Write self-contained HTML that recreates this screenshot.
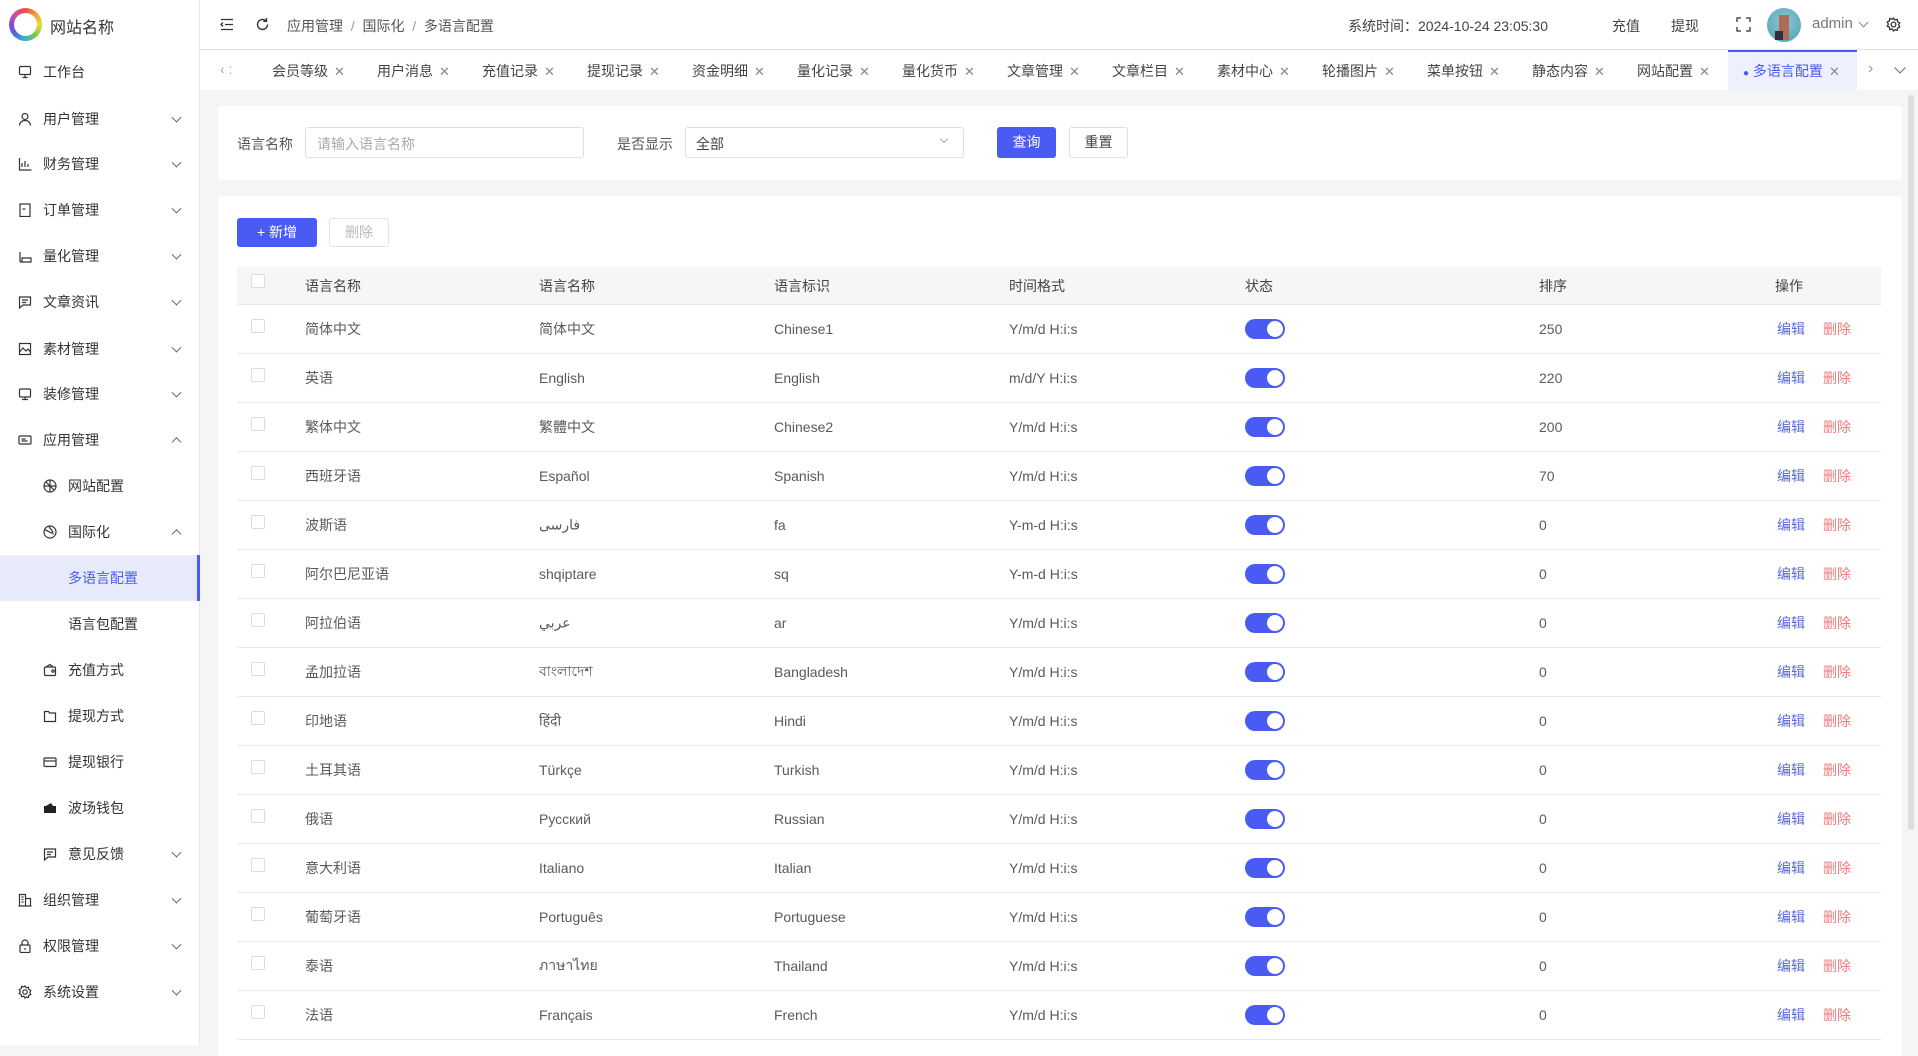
<!DOCTYPE html>
<html><head><meta charset="utf-8">
<style>
*{margin:0;padding:0;box-sizing:border-box}
body{width:1918px;height:1045px;overflow:hidden;background:#f5f5f5;font-family:"Liberation Sans","Noto Sans CJK SC",sans-serif;font-size:14px;color:#555;position:relative}
.a{position:absolute;white-space:nowrap}
#side{position:absolute;left:0;top:0;width:200px;height:1045px;background:#fff;border-right:1px solid #e8e8e8}
#head{position:absolute;left:200px;top:0;width:1718px;height:50px;background:#fff;border-bottom:1px solid #e4e4e4}
#tabs{position:absolute;left:200px;top:50px;width:1718px;height:40px;background:#fff}
.mi{position:absolute;left:0;width:200px;height:46px;font-size:14px;color:#333}
.mi .t{position:absolute;left:43px;top:50%;transform:translateY(-50%)}
.mi .ic{position:absolute;left:18px;top:50%;transform:translateY(-50%);width:14px;height:14px}
.mi.sub .t{left:68px}.mi.sub .ic{left:43px}
.mi .ch{position:absolute;left:173px;top:50%;width:7px;height:7px;border-right:1px solid #666;border-bottom:1px solid #666;transform:translateY(-70%) rotate(45deg)}
.mi .ch.up{transform:translateY(-20%) rotate(-135deg)}
.tab{position:absolute;top:51px;height:40px;line-height:40px;font-size:14px;color:#444}
.tab .x{color:#888;margin-left:6px;font-size:13px}
.card{position:absolute;background:#fff;border-radius:3px}
.row{position:absolute;left:237px;width:1644px;height:49px;border-bottom:1px solid #ebebeb;background:#fff;font-size:14px;color:#5a5a5a}
.row span{position:absolute;top:50%;transform:translateY(-50%);white-space:nowrap}
.cb{position:absolute;left:14px;top:50%;margin-top:-10px;width:14px;height:14px;border:1px solid #dcdcdc;border-radius:2px;background:#fff}
.sw{position:absolute;left:1008px;top:50%;margin-top:-10px;width:40px;height:20px;border-radius:10px;background:#4a5bf3}
.sw:after{content:"";position:absolute;right:2px;top:2px;width:16px;height:16px;border-radius:50%;background:#fff}
.ed{color:#5a6ad6}.de{color:#ef7b7b}
</style></head><body>

<div id="side">
  <div class="a" style="left:9px;top:8px;width:33px;height:33px;border-radius:50%;background:conic-gradient(#e84d4d,#f2a03c,#f4d53c,#7ac943,#3cb6c9,#4a6de0,#8a4ad6,#d64aa8,#e84d4d)"></div>
  <div class="a" style="left:14px;top:13px;width:23px;height:23px;border-radius:50%;background:#fff"></div>
  <div class="a" style="left:50px;top:14px;font-size:16px;color:#333">网站名称</div>

  <div class="mi" style="top:49px"><svg class="ic" viewBox="0 0 14 14" fill="none" stroke="#333" stroke-width="1.2"><rect x="1.5" y="1.5" width="11" height="8" rx="1"/><path d="M7 9.5v3M4.5 12.5h5"/></svg><span class="t">工作台</span></div>
  <div class="mi" style="top:96px"><svg class="ic" viewBox="0 0 14 14" fill="none" stroke="#333" stroke-width="1.2"><circle cx="7" cy="4.5" r="3"/><path d="M1.5 13.5c0-3 2.5-5 5.5-5s5.5 2 5.5 5"/></svg><span class="t">用户管理</span><i class="ch"></i></div>
  <div class="mi" style="top:141px"><svg class="ic" viewBox="0 0 14 14" fill="none" stroke="#333" stroke-width="1.2"><path d="M1.5 1v12h12M4 10V6M7 10V4M10 10V7"/></svg><span class="t">财务管理</span><i class="ch"></i></div>
  <div class="mi" style="top:187px"><svg class="ic" viewBox="0 0 14 14" fill="none" stroke="#333" stroke-width="1.2"><rect x="2" y="1" width="10" height="12.5"/><path d="M4.5 6h3"/></svg><span class="t">订单管理</span><i class="ch"></i></div>
  <div class="mi" style="top:233px"><svg class="ic" viewBox="0 0 14 14" fill="none" stroke="#333" stroke-width="1.2"><path d="M2 3v10M2 13h11V9H4v4"/></svg><span class="t">量化管理</span><i class="ch"></i></div>
  <div class="mi" style="top:279px"><svg class="ic" viewBox="0 0 14 14" fill="none" stroke="#333" stroke-width="1.2"><path d="M1.5 2h11v8H5l-3.5 3z"/><path d="M4 5h6M4 7.5h4"/></svg><span class="t">文章资讯</span><i class="ch"></i></div>
  <div class="mi" style="top:326px"><svg class="ic" viewBox="0 0 14 14" fill="none" stroke="#333" stroke-width="1.2"><rect x="1.5" y="1.5" width="11" height="11"/><path d="M1.5 10l3.5-4 3 3 2-2 2.5 3"/></svg><span class="t">素材管理</span><i class="ch"></i></div>
  <div class="mi" style="top:371px"><svg class="ic" viewBox="0 0 14 14" fill="none" stroke="#333" stroke-width="1.2"><rect x="1.5" y="2" width="11" height="8" rx="1"/><path d="M4 12.5h6M7 10v2.5"/></svg><span class="t">装修管理</span><i class="ch"></i></div>
  <div class="mi" style="top:417px"><svg class="ic" viewBox="0 0 14 14" fill="none" stroke="#333" stroke-width="1.2"><rect x="1" y="3" width="12" height="8" rx="1"/><path d="M3.5 6h4M3.5 8h6"/></svg><span class="t">应用管理</span><i class="ch up"></i></div>
  <div class="mi sub" style="top:463px"><svg class="ic" viewBox="0 0 14 14" fill="none" stroke="#333" stroke-width="1.2"><circle cx="7" cy="7" r="6"/><path d="M1 7h12M7 1v12M3 3l8 8"/></svg><span class="t">网站配置</span></div>
  <div class="mi sub" style="top:509px"><svg class="ic" viewBox="0 0 14 14" fill="none" stroke="#333" stroke-width="1.2"><circle cx="7" cy="7" r="6"/><path d="M2 5c3 0 4 3 7 3M6 1.5c1 3 4 3 4 8"/></svg><span class="t">国际化</span><i class="ch up"></i></div>
  <div class="mi sub" style="top:555px;background:#e8ebfb;border-right:3px solid #4a5bf3"><span class="t" style="color:#4a5bf3">多语言配置</span></div>
  <div class="mi sub" style="top:601px"><span class="t">语言包配置</span></div>
  <div class="mi sub" style="top:647px"><svg class="ic" viewBox="0 0 14 14" fill="none" stroke="#333" stroke-width="1.2"><rect x="1.5" y="4" width="11" height="8.5" rx="1"/><path d="M3 4l4-2.5 3 2.5"/><circle cx="10" cy="8" r="1.2"/></svg><span class="t">充值方式</span></div>
  <div class="mi sub" style="top:693px"><svg class="ic" viewBox="0 0 14 14" fill="none" stroke="#333" stroke-width="1.2"><path d="M1.5 2.5h4l1 1.5h6v8.5h-11z"/></svg><span class="t">提现方式</span></div>
  <div class="mi sub" style="top:739px"><svg class="ic" viewBox="0 0 14 14" fill="none" stroke="#333" stroke-width="1.2"><rect x="1" y="3" width="12" height="8.5" rx="1"/><path d="M1 6h12"/></svg><span class="t">提现银行</span></div>
  <div class="mi sub" style="top:785px"><svg class="ic" viewBox="0 0 14 14"><rect x="1" y="5" width="12" height="7" fill="#222"/><path d="M3 5l5-3 2 3z" fill="#222"/></svg><span class="t">波场钱包</span></div>
  <div class="mi sub" style="top:831px"><svg class="ic" viewBox="0 0 14 14" fill="none" stroke="#333" stroke-width="1.2"><path d="M1.5 2h11v8H5l-3.5 3z"/><path d="M4 5h6M4 7.5h4"/></svg><span class="t">意见反馈</span><i class="ch"></i></div>
  <div class="mi" style="top:877px"><svg class="ic" viewBox="0 0 14 14" fill="none" stroke="#333" stroke-width="1.2"><path d="M1.5 13V1.5h6V13M7.5 5.5h5V13M0.5 13h13M3.5 4h2M3.5 6.5h2M3.5 9h2"/></svg><span class="t">组织管理</span><i class="ch"></i></div>
  <div class="mi" style="top:923px"><svg class="ic" viewBox="0 0 14 14" fill="none" stroke="#333" stroke-width="1.2"><rect x="2" y="6" width="10" height="7.5" rx="1"/><path d="M4 6V4a3 3 0 0 1 6 0v2M7 9v2"/></svg><span class="t">权限管理</span><i class="ch"></i></div>
  <div class="mi" style="top:969px"><svg class="ic" viewBox="0 0 14 14" fill="none" stroke="#333" stroke-width="1.2"><circle cx="7" cy="7" r="2.2"/><path d="M7 1l1.3 1.8 2.2-.6.3 2.2 2 1-1 2 1 2-2 .9-.3 2.2-2.2-.5L7 13l-1.3-1.8-2.2.5-.3-2.2-2-.9 1-2-1-2 2-1 .3-2.2 2.2.6z"/></svg><span class="t">系统设置</span><i class="ch"></i></div>
</div>

<div id="head">
  <svg class="a" style="left:20px;top:18px" width="14" height="13" viewBox="0 0 14 13" fill="none" stroke="#333" stroke-width="1.3"><path d="M1 1.5h12M5 6.5h8M1 11.5h12M3 4.5l-2 2 2 2"/></svg>
  <svg class="a" style="left:55px;top:17px" width="15" height="15" viewBox="0 0 15 15" fill="none" stroke="#333" stroke-width="1.4"><path d="M12.5 7.5a5 5 0 1 1-1.6-3.7"/><path d="M11.5 1v3.3H8.2"/></svg>
  <div class="a" style="left:87px;top:16px;color:#555">应用管理 &nbsp;<span style="color:#999">/</span>&nbsp; 国际化 &nbsp;<span style="color:#999">/</span>&nbsp; 多语言配置</div>
  <div class="a" style="left:1148px;top:16px;color:#444">系统时间：2024-10-24 23:05:30</div>
  <div class="a" style="left:1412px;top:16px;color:#444">充值</div>
  <div class="a" style="left:1471px;top:16px;color:#444">提现</div>
  <svg class="a" style="left:1536px;top:17px" width="15" height="15" viewBox="0 0 15 15" fill="none" stroke="#333" stroke-width="1.3"><path d="M1 5V1h4M10 1h4v4M14 10v4h-4M5 14H1v-4"/></svg>
  <div class="a" style="left:1567px;top:8px;width:34px;height:34px;border-radius:50%;background:radial-gradient(circle at 50% 40%,#8fc7d4,#4a9fb0)"></div>
  <div class="a" style="left:1579px;top:15px;width:10px;height:25px;background:#b06a55"></div>
  <div class="a" style="left:1575px;top:31px;width:8px;height:9px;background:#2a2f3a"></div>
  <div class="a" style="left:1612px;top:15px;color:#777;font-size:15px">admin</div>
  <i class="a" style="left:1660px;top:19px;width:7px;height:7px;border-right:1px solid #888;border-bottom:1px solid #888;transform:rotate(45deg)"></i>
  <svg class="a" style="left:1686px;top:17px" width="15" height="15" viewBox="0 0 14 14" fill="none" stroke="#333" stroke-width="1.2"><circle cx="7" cy="7" r="2.2"/><path d="M7 1l1.3 1.8 2.2-.6.3 2.2 2 1-1 2 1 2-2 .9-.3 2.2-2.2-.5L7 13l-1.3-1.8-2.2.5-.3-2.2-2-.9 1-2-1-2 2-1 .3-2.2 2.2.6z"/></svg>
</div>

<div id="tabs">
  <div class="a" style="left:20px;top:11px;color:#aaa;font-size:14px">&lsaquo; :</div>
  <div class="a" style="left:1528px;top:0;width:129px;height:40px;background:#eef0fd;border-top:2px solid #4a5bf3"></div>
  <div class="a" style="left:1668px;top:10px;color:#999;font-size:16px">&rsaquo;</div>
  <i class="a" style="left:1696px;top:14px;width:8px;height:8px;border-right:1px solid #666;border-bottom:1px solid #666;transform:rotate(45deg)"></i>
</div>
<div class="tab" style="left:272px">会员等级<span class="x">✕</span></div>
<div class="tab" style="left:377px">用户消息<span class="x">✕</span></div>
<div class="tab" style="left:482px">充值记录<span class="x">✕</span></div>
<div class="tab" style="left:587px">提现记录<span class="x">✕</span></div>
<div class="tab" style="left:692px">资金明细<span class="x">✕</span></div>
<div class="tab" style="left:797px">量化记录<span class="x">✕</span></div>
<div class="tab" style="left:902px">量化货币<span class="x">✕</span></div>
<div class="tab" style="left:1007px">文章管理<span class="x">✕</span></div>
<div class="tab" style="left:1112px">文章栏目<span class="x">✕</span></div>
<div class="tab" style="left:1217px">素材中心<span class="x">✕</span></div>
<div class="tab" style="left:1322px">轮播图片<span class="x">✕</span></div>
<div class="tab" style="left:1427px">菜单按钮<span class="x">✕</span></div>
<div class="tab" style="left:1532px">静态内容<span class="x">✕</span></div>
<div class="tab" style="left:1637px">网站配置<span class="x">✕</span></div>
<div class="tab" style="left:1743px;color:#4a5bf3"><span style="font-size:10px">●</span> 多语言配置<span class="x">✕</span></div>

<div class="a" style="left:1908px;top:95px;width:6px;height:735px;background:#ddd;border-radius:3px"></div>

<div class="card" style="left:218px;top:106px;width:1684px;height:74px"></div>
<div class="a" style="left:237px;top:134px;color:#555">语言名称</div>
<div class="a" style="left:305px;top:127px;width:279px;height:31px;border:1px solid #dcdfe6;border-radius:3px;background:#fff"></div>
<div class="a" style="left:317px;top:134px;color:#aaa">请输入语言名称</div>
<div class="a" style="left:617px;top:134px;color:#555">是否显示</div>
<div class="a" style="left:685px;top:127px;width:279px;height:31px;border:1px solid #dcdfe6;border-radius:3px;background:#fff"></div>
<div class="a" style="left:696px;top:134px;color:#444">全部</div>
<i class="a" style="left:941px;top:136px;width:6px;height:6px;border-right:1px solid #aaa;border-bottom:1px solid #aaa;transform:rotate(45deg)"></i>
<div class="a" style="left:997px;top:127px;width:59px;height:31px;background:#4a5bf3;border-radius:3px;color:#fff;text-align:center;line-height:31px">查询</div>
<div class="a" style="left:1069px;top:127px;width:59px;height:31px;border:1px solid #dcdfe6;border-radius:3px;background:#fff;color:#444;text-align:center;line-height:29px">重置</div>

<div class="card" style="left:218px;top:196px;width:1684px;height:860px"></div>
<div class="a" style="left:237px;top:218px;width:80px;height:29px;background:#4a5bf3;border-radius:3px;color:#fff;text-align:center;line-height:29px">+ 新增</div>
<div class="a" style="left:329px;top:218px;width:60px;height:29px;border:1px solid #e4e4e4;border-radius:3px;color:#bbb;text-align:center;line-height:27px">删除</div>

<div class="row" style="top:267px;height:38px;background:#f6f6f7;color:#444">
  <i class="cb" style="margin-top:-12px"></i>
  <span style="left:68px">语言名称</span><span style="left:302px">语言名称</span><span style="left:537px">语言标识</span><span style="left:772px">时间格式</span><span style="left:1008px">状态</span><span style="left:1302px">排序</span><span style="left:1538px">操作</span>
</div>

<div class="row" style="top:305px"><i class="cb"></i><span style="left:68px">简体中文</span><span style="left:302px">简体中文</span><span style="left:537px">Chinese1</span><span style="left:772px">Y/m/d H:i:s</span><i class="sw"></i><span style="left:1302px">250</span><span style="left:1540px" class="ed">编辑</span><span style="left:1586px" class="de">删除</span></div>
<div class="row" style="top:354px"><i class="cb"></i><span style="left:68px">英语</span><span style="left:302px">English</span><span style="left:537px">English</span><span style="left:772px">m/d/Y H:i:s</span><i class="sw"></i><span style="left:1302px">220</span><span style="left:1540px" class="ed">编辑</span><span style="left:1586px" class="de">删除</span></div>
<div class="row" style="top:403px"><i class="cb"></i><span style="left:68px">繁体中文</span><span style="left:302px">繁體中文</span><span style="left:537px">Chinese2</span><span style="left:772px">Y/m/d H:i:s</span><i class="sw"></i><span style="left:1302px">200</span><span style="left:1540px" class="ed">编辑</span><span style="left:1586px" class="de">删除</span></div>
<div class="row" style="top:452px"><i class="cb"></i><span style="left:68px">西班牙语</span><span style="left:302px">Español</span><span style="left:537px">Spanish</span><span style="left:772px">Y/m/d H:i:s</span><i class="sw"></i><span style="left:1302px">70</span><span style="left:1540px" class="ed">编辑</span><span style="left:1586px" class="de">删除</span></div>
<div class="row" style="top:501px"><i class="cb"></i><span style="left:68px">波斯语</span><span style="left:302px">فارسی</span><span style="left:537px">fa</span><span style="left:772px">Y-m-d H:i:s</span><i class="sw"></i><span style="left:1302px">0</span><span style="left:1540px" class="ed">编辑</span><span style="left:1586px" class="de">删除</span></div>
<div class="row" style="top:550px"><i class="cb"></i><span style="left:68px">阿尔巴尼亚语</span><span style="left:302px">shqiptare</span><span style="left:537px">sq</span><span style="left:772px">Y-m-d H:i:s</span><i class="sw"></i><span style="left:1302px">0</span><span style="left:1540px" class="ed">编辑</span><span style="left:1586px" class="de">删除</span></div>
<div class="row" style="top:599px"><i class="cb"></i><span style="left:68px">阿拉伯语</span><span style="left:302px">عربي</span><span style="left:537px">ar</span><span style="left:772px">Y/m/d H:i:s</span><i class="sw"></i><span style="left:1302px">0</span><span style="left:1540px" class="ed">编辑</span><span style="left:1586px" class="de">删除</span></div>
<div class="row" style="top:648px"><i class="cb"></i><span style="left:68px">孟加拉语</span><span style="left:302px">বাংলাদেশ</span><span style="left:537px">Bangladesh</span><span style="left:772px">Y/m/d H:i:s</span><i class="sw"></i><span style="left:1302px">0</span><span style="left:1540px" class="ed">编辑</span><span style="left:1586px" class="de">删除</span></div>
<div class="row" style="top:697px"><i class="cb"></i><span style="left:68px">印地语</span><span style="left:302px">हिंदी</span><span style="left:537px">Hindi</span><span style="left:772px">Y/m/d H:i:s</span><i class="sw"></i><span style="left:1302px">0</span><span style="left:1540px" class="ed">编辑</span><span style="left:1586px" class="de">删除</span></div>
<div class="row" style="top:746px"><i class="cb"></i><span style="left:68px">土耳其语</span><span style="left:302px">Türkçe</span><span style="left:537px">Turkish</span><span style="left:772px">Y/m/d H:i:s</span><i class="sw"></i><span style="left:1302px">0</span><span style="left:1540px" class="ed">编辑</span><span style="left:1586px" class="de">删除</span></div>
<div class="row" style="top:795px"><i class="cb"></i><span style="left:68px">俄语</span><span style="left:302px">Русский</span><span style="left:537px">Russian</span><span style="left:772px">Y/m/d H:i:s</span><i class="sw"></i><span style="left:1302px">0</span><span style="left:1540px" class="ed">编辑</span><span style="left:1586px" class="de">删除</span></div>
<div class="row" style="top:844px"><i class="cb"></i><span style="left:68px">意大利语</span><span style="left:302px">Italiano</span><span style="left:537px">Italian</span><span style="left:772px">Y/m/d H:i:s</span><i class="sw"></i><span style="left:1302px">0</span><span style="left:1540px" class="ed">编辑</span><span style="left:1586px" class="de">删除</span></div>
<div class="row" style="top:893px"><i class="cb"></i><span style="left:68px">葡萄牙语</span><span style="left:302px">Português</span><span style="left:537px">Portuguese</span><span style="left:772px">Y/m/d H:i:s</span><i class="sw"></i><span style="left:1302px">0</span><span style="left:1540px" class="ed">编辑</span><span style="left:1586px" class="de">删除</span></div>
<div class="row" style="top:942px"><i class="cb"></i><span style="left:68px">泰语</span><span style="left:302px">ภาษาไทย</span><span style="left:537px">Thailand</span><span style="left:772px">Y/m/d H:i:s</span><i class="sw"></i><span style="left:1302px">0</span><span style="left:1540px" class="ed">编辑</span><span style="left:1586px" class="de">删除</span></div>
<div class="row" style="top:991px"><i class="cb"></i><span style="left:68px">法语</span><span style="left:302px">Français</span><span style="left:537px">French</span><span style="left:772px">Y/m/d H:i:s</span><i class="sw"></i><span style="left:1302px">0</span><span style="left:1540px" class="ed">编辑</span><span style="left:1586px" class="de">删除</span></div>

</body></html>
